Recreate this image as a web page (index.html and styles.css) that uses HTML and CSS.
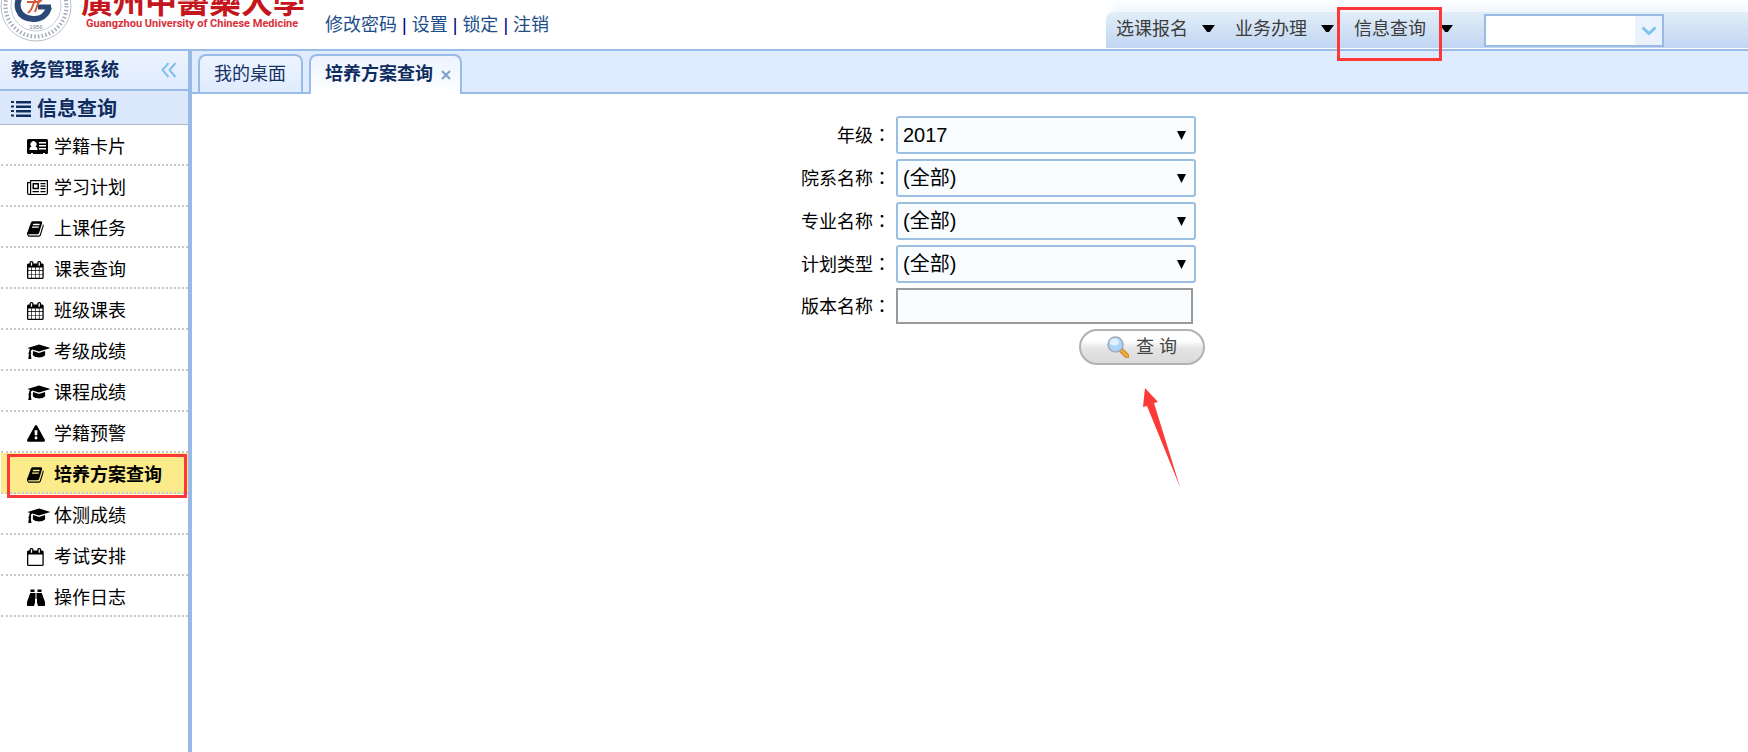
FILE: index.html
```html
<!DOCTYPE html>
<html lang="zh-CN">
<head>
<meta charset="utf-8">
<title>教务管理系统</title>
<link rel="stylesheet" href="styles.css">
</head>
<body>
<svg class="sprite" aria-hidden="true">
  <symbol id="i-card" viewBox="0 0 24 18"><path fill-rule="evenodd" d="M1.500 1h18A1.500 1.500 0 0 1 21 2.500v12A1.500 1.500 0 0 1 19.500 16H18v-1h-2v1H6v-1H4v1H1.500A1.500 1.500 0 0 1 0 14.500v-12A1.500 1.500 0 0 1 1.500 1zM4.500 8.500C3.200 8.800 2.500 10 2.500 12h8c0-2-.7-3.200-2-3.500a3 3 0 1 0-4 0zM12 4v1.500h7V4zm0 3v1.500h7V7zm0 3v1.500h7V10z"/></symbol>
  <symbol id="i-news" viewBox="0 0 24 18"><path fill-rule="evenodd" d="M3 1h18v13a2 2 0 0 1-2 2H2a2 2 0 0 1-2-2V3h3zm1.200 1.200V14c0 .4 0 .6-.2.900h15c.5 0 .8-.4.800-.9V2.200zM1.200 4.200V14c0 .5.300.9.900.9s.9-.4.900-.9V4.200zM5.500 4H12v6.200H5.500zM7 5.500v3.200h3.500V5.500zM13.500 4h5v1.200h-5zm0 2.500h5v1.200h-5zm0 2.500h5v1.200h-5zm-8 3H12v1.200H5.500zm8 0h5v1.200h-5z"/></symbol>
  <symbol id="i-book" viewBox="0 0 1792 1792"><path d="M1639 478q40 57 18 129l-275 906q-19 64-76.500 107.500t-122.500 43.500h-923q-77 0-148.500-53.500t-99.500-131.500q-24-67-2-127 0-4 3-27t4-37q1-8-3-21.500t-3-19.500q2-11 8-21t16.500-23.500 16.500-23.500q23-38 45-91.500t30-91.500q3-10 .5-30t-.5-28q3-11 17-28t17-23q21-36 42-92t25-90q1-9-2.500-32t.5-28q4-13 22-30.500t22-22.500q19-26 42.500-84.500t27.500-96.500q1-8-3-25.500t-2-26.500q2-8 9-18t18-23 17-21q8-12 16.500-30.500t15-35 16-36 19.500-32 26.500-23.500 36-11.500 47.500 5.500l-1 3q38-9 51-9h761q74 0 114 56t18 130l-274 906q-36 119-71.500 153.500t-128.500 34.500h-869q-27 0-38 15-11 16-1 43 24 70 144 70h923q29 0 56-15.500t35-41.500l300-987q7-22 5-57 38 15 59 43zm-1064 2q-4 13 2 22.500t20 9.500h608q13 0 25.500-9.500t16.500-22.500l21-64q4-13-2-22.500t-20-9.500h-608q-13 0-25.500 9.500t-16.500 22.500zm-83 256q-4 13 2 22.500t20 9.500h608q13 0 25.500-9.500t16.500-22.500l21-64q4-13-2-22.500t-20-9.500h-608q-13 0-25.500 9.500t-16.500 22.500z"/></symbol>
  <symbol id="i-cal" viewBox="64 0 1792 1792"><path d="M192 1664h288v-288h-288v288zm352 0h320v-288h-320v288zm-352-352h288v-320h-288v320zm352 0h320v-320h-320v320zm-352-384h288v-288h-288v288zm736 736h320v-288h-320v288zm-384-736h320v-288h-320v288zm768 736h288v-288h-288v288zm-384-352h320v-320h-320v320zm-352-864v-288q0-13-9.500-22.500t-22.500-9.500h-64q-13 0-22.500 9.500t-9.500 22.500v288q0 13 9.500 22.500t22.500 9.500h64q13 0 22.500-9.500t9.500-22.500zm736 864h288v-320h-288v320zm-384-384h320v-288h-320v288zm384 0h288v-288h-288v288zm32-480v-288q0-13-9.500-22.500t-22.500-9.500h-64q-13 0-22.500 9.500t-9.500 22.500v288q0 13 9.500 22.500t22.500 9.500h64q13 0 22.500-9.500t9.500-22.500zm384-64v1280q0 52-38 90t-90 38h-1408q-52 0-90-38t-38-90v-1280q0-52 38-90t90-38h128v-96q0-66 47-113t113-47h64q66 0 113 47t47 113v96h384v-96q0-66 47-113t113-47h64q66 0 113 47t47 113v96h128q52 0 90 38t38 90z"/></symbol>
  <symbol id="i-calo" viewBox="64 0 1792 1792"><path d="M192 1664h1408v-1024h-1408v1024zm384-1216v-288q0-13-9.500-22.500t-22.500-9.500h-64q-13 0-22.500 9.500t-9.500 22.500v288q0 13 9.500 22.500t22.500 9.500h64q13 0 22.500-9.500t9.500-22.500zm768 0v-288q0-13-9.500-22.500t-22.500-9.500h-64q-13 0-22.500 9.500t-9.500 22.500v288q0 13 9.500 22.500t22.500 9.500h64q13 0 22.500-9.500t9.500-22.500zm384-64v1280q0 52-38 90t-90 38h-1408q-52 0-90-38t-38-90v-1280q0-52 38-90t90-38h128v-96q0-66 47-113t113-47h64q66 0 113 47t47 113v96h384v-96q0-66 47-113t113-47h64q66 0 113 47t47 113v96h128q52 0 90 38t38 90z"/></symbol>
  <symbol id="i-warn" viewBox="0 0 1792 1792"><path d="M1024 1375v-190q0-14-9.500-23.500t-22.500-9.500h-192q-13 0-22.500 9.500t-9.500 23.500v190q0 14 9.500 23.500t22.500 9.500h192q13 0 22.500-9.500t9.500-23.500zm-2-374l18-459q0-12-10-19-13-11-24-11h-220q-11 0-24 11-10 7-10 21l17 457q0 10 10 16.500t24 6.500h185q14 0 23.500-6.500t10.500-16.500zm-14-934l768 1408q35 63-2 126-17 29-46.500 46t-63.500 17h-1536q-34 0-63.500-17t-46.500-46q-37-63-2-126l768-1408q17-31 47-49t65-18 65 18 47 49z"/></symbol>
  <symbol id="i-cap" viewBox="0 0 24 18"><path d="M12 1.500 23.500 5 12 8.600 5.200 6.500c-1 .6-1.400 1.500-1.500 2.800.6.300.8 1.400.1 1.900l.6 4.800H1.300l.6-4.800c-.7-.5-.6-1.500.1-1.900 0-1.300.3-2.400 1-3.300L.5 5zM12 10l6-1.900.2 3.400c0 1.600-2.800 2.900-6.200 2.900s-6.200-1.300-6.200-2.900L6 8.100z"/></symbol>
  <symbol id="i-bino" viewBox="0 0 24 18"><path d="M3.500.5h4V3h-4zM10.500.5h4V3h-4zM3.200 4H8v9.500L7 17H0v-4zM14.800 4H10v9.500l1 3.500h7v-4zM8.500 4h1v6h-1z"/></symbol>
</svg>

<header class="top">
  <svg class="logo" viewBox="0 0 312 49" role="img" aria-label="Guangzhou University of Chinese Medicine">
    <g fill="none">
      <circle cx="36" cy="6" r="35" stroke="#b9bfcc"/>
      <circle cx="36" cy="6" r="30.500" stroke="#a2a9b8" stroke-width="4" stroke-dasharray="1.500 2.200"/>
      <circle cx="36" cy="6" r="25" stroke="#c8cdd7"/>
      <path d="M22-6C14 4 17 18 33 19c8 .5 14-4 16-12" stroke="#2c4877" stroke-width="6"/>
      <path d="M38 7h13" stroke="#2c4877" stroke-width="5"/>
      <path d="M28 13C34 9 32 2 37-2M27 2h12q3-1 3-5M35 12l5-14" stroke="#d75a3c" stroke-width="2"/>
    </g>
    <text x="36" y="29" class="logo-year">1956</text>
    <text x="81" y="13" class="logo-cn">廣州中醫藥大學</text>
    <text x="86" y="27" class="logo-en">Guangzhou University of Chinese Medicine</text>
  </svg>
  <nav class="links">
    <a href="#">修改密码</a> | <a href="#">设置</a> | <a href="#">锁定</a> | <a href="#">注销</a>
  </nav>
  <div class="menu">
    <button class="menu-btn">选课报名<span class="caret"></span></button>
    <button class="menu-btn">业务办理<span class="caret"></span></button>
    <button class="menu-btn marked">信息查询<span class="caret"></span></button>
    <div class="combo">
      <input type="text" aria-label="搜索">
      <button aria-label="展开"><svg viewBox="0 0 16 10"><path d="M1.500 1.500 8 7.500l6.500-6" fill="none" stroke="#7cc3ef" stroke-width="3"/></svg></button>
    </div>
  </div>
</header>

<div class="body">
  <aside class="side">
    <div class="side-head"><h1>教务管理系统</h1>
      <button class="collapse" aria-label="收起"><svg viewBox="0 0 16 16"><path d="M7.500 1 1.500 8l6 7M14.500 1l-6 7 6 7" fill="none" stroke="#82c2f0" stroke-width="2"/></svg></button>
    </div>
    <h2 class="side-group">
      <svg viewBox="0 0 20 16"><path fill="#0f2d5e" d="M0 0h3v2H0zM0 4.500h3v2H0zM0 9h3v2H0zM0 13.500h3v2H0zM5 0h15v2.500H5zM5 4.500h15V7H5zM5 9h15v2.500H5zM5 13.500h15V16H5z"/></svg>信息查询
    </h2>
    <ul class="items">
      <li><a href="#"><svg class="w24"><use href="#i-card"/></svg>学籍卡片</a></li>
      <li><a href="#"><svg class="w24"><use href="#i-news"/></svg>学习计划</a></li>
      <li><a href="#"><svg><use href="#i-book"/></svg>上课任务</a></li>
      <li><a href="#"><svg><use href="#i-cal"/></svg>课表查询</a></li>
      <li><a href="#"><svg><use href="#i-cal"/></svg>班级课表</a></li>
      <li><a href="#"><svg class="w24"><use href="#i-cap"/></svg>考级成绩</a></li>
      <li><a href="#"><svg class="w24"><use href="#i-cap"/></svg>课程成绩</a></li>
      <li><a href="#"><svg><use href="#i-warn"/></svg>学籍预警</a></li>
      <li class="active"><a href="#"><svg><use href="#i-book"/></svg>培养方案查询</a></li>
      <li><a href="#"><svg class="w24"><use href="#i-cap"/></svg>体测成绩</a></li>
      <li><a href="#"><svg><use href="#i-calo"/></svg>考试安排</a></li>
      <li><a href="#"><svg class="w24"><use href="#i-bino"/></svg>操作日志</a></li>
    </ul>
  </aside>

  <main class="main">
    <div class="tabs">
      <a class="tab" href="#">我的桌面</a>
      <div class="tab current"><a href="#">培养方案查询</a>
        <button aria-label="关闭"><svg viewBox="0 0 10 10"><path d="m1 1 8 8M9 1 1 9" fill="none" stroke="#7f9fcb" stroke-width="2"/></svg></button>
      </div>
    </div>
    <form class="query">
      <label for="grade">年级<span lang="zh-TW">：</span></label>
      <div class="pick"><select id="grade"><option>2017</option></select></div>
      <label for="dept">院系名称<span lang="zh-TW">：</span></label>
      <div class="pick"><select id="dept"><option>(全部)</option></select></div>
      <label for="major">专业名称<span lang="zh-TW">：</span></label>
      <div class="pick"><select id="major"><option>(全部)</option></select></div>
      <label for="plan">计划类型<span lang="zh-TW">：</span></label>
      <div class="pick"><select id="plan"><option>(全部)</option></select></div>
      <label for="version">版本名称<span lang="zh-TW">：</span></label>
      <input id="version" type="text">
      <div class="actions">
        <button type="button" class="search">
          <svg viewBox="0 0 22 22">
            <path d="m14 14 6 6" stroke="#b98345" stroke-width="5" stroke-linecap="round"/>
            <path d="m15 15 5 5" stroke="#f7a928" stroke-width="3" stroke-linecap="round"/>
            <circle cx="8.500" cy="8.500" r="7.500" fill="#a9d5fb" stroke="#a3abb8" stroke-width="1.600"/>
            <ellipse cx="7.500" cy="6" rx="4.500" ry="3.500" fill="#dff0ff"/>
          </svg>查 询
        </button>
        <svg class="pointer" viewBox="0 0 38 100" aria-hidden="true"><path fill="#fc3a38" d="M2 0 15 14l-4 1 26 84L4 18l-4 1z"/></svg>
      </div>
    </form>
  </main>
</div>
</body>
</html>
```

FILE: styles.css
```css
*, *::before, *::after { box-sizing: border-box; }
body {
  margin: 0;
  min-height: 100vh;
  display: flex;
  flex-direction: column;
  background: #fff;
  color: #000;
  font: 400 18px/24px "Liberation Sans", "Noto Sans CJK SC", sans-serif;
}
button, input, select { font: inherit; color: inherit; margin: 0; }
button { border: 0; padding: 0; background: none; cursor: pointer; }
a { color: inherit; text-decoration: none; }
svg { display: block; }
.sprite { position: absolute; width: 0; height: 0; }

.top {
  display: flex;
  height: 51px;
  border-bottom: 2px solid #99bbe8;
}
.logo { width: 312px; height: 49px; flex: none; }
.logo-year { font-size: 6px; fill: #7d8699; text-anchor: middle; }
.logo-cn { font: 700 32px "Noto Sans CJK TC", sans-serif; fill: #c5161d; }
.logo-en { font: 700 11px Roboto, sans-serif; fill: #d9303a; }
.links { padding: 13px 0 0 13px; color: #000080; white-space: nowrap; }
.links a { color: #204d89; }

.menu {
  display: flex;
  width: 642px;
  height: 36px;
  margin: 12px 0 0 auto;
  padding-left: 10px;
  border-top-left-radius: 8px;
  background: linear-gradient(#e2eef9, #d3e3f5 45%, #c0d6f2);
  box-shadow: 4px -8px 8px #f3f8fe;
}
.menu-btn {
  position: relative;
  display: flex;
  align-items: center;
  width: 119px;
  height: 33px;
  color: #3c3c3c;
}
.caret {
  width: 13px;
  height: 7px;
  margin-left: 14px;
  background: #000;
  clip-path: polygon(0 0, 100% 0, 60% 100%, 40% 100%);
}
.marked::after {
  content: "";
  position: absolute;
  left: -17px;
  top: -5px;
  width: 105px;
  height: 54px;
  border: 3px solid #fc3838;
}
.combo {
  display: flex;
  width: 180px;
  height: 33px;
  margin: 2px 0 0 11px;
  border: 2px solid #99bbe8;
  background: #fff;
}
.combo input { flex: 1; min-width: 0; border: 0; padding: 0 4px; background: #fff; outline: 0; }
.combo button { display: grid; place-items: center; width: 27px; background: #eaf2fe; }
.combo svg { width: 16px; height: 10px; }

.body { flex: 1; display: flex; }
.side { width: 192px; flex: none; border-right: 4px solid #99b9e6; }
.side-head {
  display: flex;
  align-items: center;
  justify-content: space-between;
  height: 40px;
  padding: 0 11px;
  border-bottom: 2px solid #99bbe8;
  background: linear-gradient(#edf4ff, #dfebff);
}
h1, h2 { margin: 0; color: #0f2d5e; font-weight: 700; }
h1 { font-size: 18px; }
.collapse svg { width: 16px; height: 16px; }
.side-group {
  display: flex;
  align-items: center;
  gap: 6px;
  height: 34px;
  padding-left: 11px;
  padding-top: 3px;
  border-bottom: 1px solid #b0b8c6;
  background: #dce9fd;
  font-size: 20px;
}
.side-group svg { width: 20px; height: 16px; }
.items { list-style: none; margin: 0; padding: 0 0 0 1px; }
.items li { height: 41px; border-bottom: 2px dotted #c8c8c8; }
.items a { display: flex; align-items: center; height: 39px; padding: 4px 0 0 26px; }
.items svg { width: 18px; height: 18px; margin-right: 9px; }
.items .w24 { width: 24px; margin-right: 3px; }
.active { position: relative; background: #fceb8a; font-weight: 700; }
.active::after {
  content: "";
  position: absolute;
  inset: 1px 1px -6px 6px;
  border: 3px solid #fc3838;
}

.main { flex: 1; min-width: 0; }
.tabs {
  display: flex;
  gap: 6px;
  height: 43px;
  padding: 3px 6px 0;
  border-bottom: 2px solid #99bbe8;
  background: #dfebff;
}
.tab {
  display: flex;
  align-items: center;
  height: 38px;
  padding: 0 15px 0 14px;
  border: 2px solid #99bbe8;
  border-bottom: 0;
  border-radius: 8px 8px 0 0;
  background: linear-gradient(#edf4ff, #dfebff);
  color: #15315f;
}
.tab.current {
  height: 40px;
  padding: 0 9px 2px 14px;
  background: linear-gradient(#edf3fe, #fff);
  color: #0f2d5e;
  font-weight: 700;
}
.tab button { margin: 2px 0 0 8px; }
.tab button svg { width: 10px; height: 10px; }

.query {
  display: grid;
  grid-template-columns: 156px 309px;
  gap: 5px;
  width: 470px;
  margin: 22px auto 0;
  align-items: center;
}
.query label { text-align: right; }
.query label span { font-family: "Noto Sans CJK TC", sans-serif; }
.pick { position: relative; width: 300px; height: 38px; }
.pick select {
  appearance: none;
  width: 100%;
  height: 100%;
  padding: 0 24px 0 5px;
  border: 2px solid #9bbfe0;
  border-radius: 3px;
  background: #f9fdff;
  font-size: 20px;
}
.pick::after {
  content: "";
  position: absolute;
  right: 10px;
  top: 15px;
  width: 9px;
  height: 9px;
  background: #000;
  clip-path: polygon(0 0, 100% 0, 50% 100%);
  pointer-events: none;
}
.query input { width: 297px; height: 36px; padding: 0 6px; border: 2px solid #999; background: #f9fdff; }
.actions { position: relative; grid-column: 2; justify-self: end; }
.search {
  display: flex;
  align-items: center;
  justify-content: center;
  gap: 7px;
  width: 126px;
  height: 36px;
  border: 2px solid #b2b2b2;
  border-radius: 18px;
  background: linear-gradient(#fff 30%, #e4e4e4 55%, #dadada);
  color: #444;
}
.search svg { width: 22px; height: 22px; }
.pointer { position: absolute; left: 64px; top: 59px; width: 38px; height: 100px; }
```
